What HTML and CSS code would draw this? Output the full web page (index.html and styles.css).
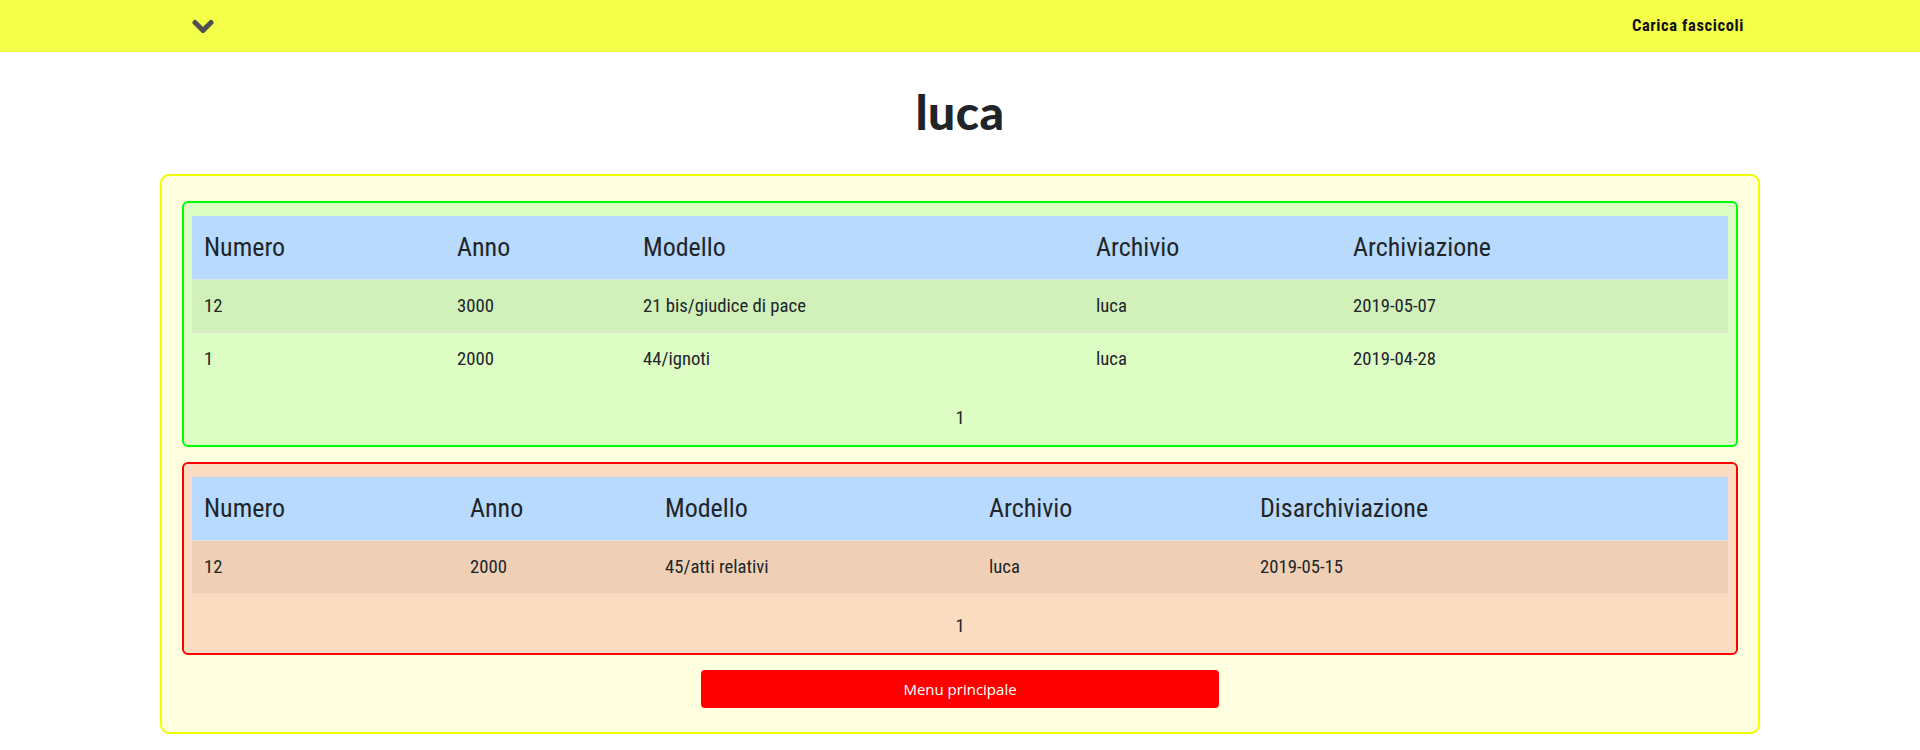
FILE: index.html
```html
<!DOCTYPE html>
<html lang="it">
<head>
<meta charset="utf-8">
<title>luca</title>
<link rel="stylesheet" href="styles.css">
</head>
<body>
<nav class="navbar">
  <span class="toggle">
    <svg width="22" height="15" viewBox="0 0 22 15"><polyline points="3,3.5 11,11.5 19,3.5" fill="none" stroke="#4f4f4f" stroke-width="5" stroke-linecap="round" stroke-linejoin="round"/></svg>
  </span>
  <a class="nav-link">Carica fascicoli</a>
</nav>
<h1 class="title">luca</h1>
<div class="outer">
  <div class="card card-green">
    <table class="tbl">
      <colgroup><col class="g1"><col class="g2"><col class="g3"><col class="g4"><col class="g5"></colgroup>
      <thead><tr><th>Numero</th><th>Anno</th><th>Modello</th><th>Archivio</th><th>Archiviazione</th></tr></thead>
      <tbody>
        <tr class="odd"><td>12</td><td>3000</td><td>21 bis/giudice di pace</td><td>luca</td><td>2019-05-07</td></tr>
        <tr><td>1</td><td>2000</td><td>44/ignoti</td><td>luca</td><td>2019-04-28</td></tr>
      </tbody>
    </table>
    <div class="pager">1</div>
  </div>
  <div class="card card-red">
    <table class="tbl">
      <colgroup><col class="r1"><col class="r2"><col class="r3"><col class="r4"><col class="r5"></colgroup>
      <thead><tr><th>Numero</th><th>Anno</th><th>Modello</th><th>Archivio</th><th>Disarchiviazione</th></tr></thead>
      <tbody>
        <tr class="odd"><td>12</td><td>2000</td><td>45/atti relativi</td><td>luca</td><td>2019-05-15</td></tr>
      </tbody>
    </table>
    <div class="pager">1</div>
  </div>
  <div class="actions">
    <button class="btn-menu">Menu principale</button>
  </div>
</div>
</body>
</html>
```
FILE: styles.css
```css
html, body { margin: 0; padding: 0; background: #fff; color: #212529; }
body { font-family: "Roboto Condensed", "Liberation Sans Narrow", "DejaVu Sans Condensed", Roboto, sans-serif; }

.navbar {
  height: 52px;
  background: #f3ff48;
  display: flex;
  align-items: center;
  justify-content: space-between;
  padding: 0 176px 0 192px;
  box-sizing: border-box;
}
.toggle { display: flex; width: 22px; height: 15px; margin-top: 1px; }
.nav-link {
  font-family: "Roboto Condensed", "DejaVu Sans Condensed", sans-serif;
  font-weight: 700;
  font-size: 16.5px;
  letter-spacing: 0.6px;
  color: #111;
  margin-top: -2px;
}

.title {
  font-family: Lato, "Open Sans", sans-serif;
  font-weight: 900;
  font-size: 48px;
  line-height: 55px;
  letter-spacing: 0.5px;
  text-align: center;
  margin: 32px 0 35px;
  color: #212529;
}

.outer {
  width: 1600px;
  margin: 0 auto;
  box-sizing: border-box;
  border: 2px solid #eeff00;
  border-radius: 9px;
  background: #ffffe0;
  padding: 25px 20px 24px;
}

.card {
  border: 2px solid;
  border-radius: 6px;
  padding: 13px 8px 0;
}
.card-green { border-color: #00ff00; background: #ddfdc4; }
.card-red { border-color: #ff0000; background: #fcdcc0; margin-top: 15px; }

.tbl {
  width: 100%;
  border-collapse: collapse;
  table-layout: fixed;
}
.tbl th {
  background: #b8daff;
  font-weight: 400;
  font-size: 26px;
  line-height: 39px;
  padding: 12px;
  text-align: left;
}
.tbl td {
  font-size: 18.7px;
  line-height: 28px;
  padding: 12px;
  border-top: 1px solid #dee2e6;
  text-align: left;
}
.tbl tr.odd td { background: rgba(0, 0, 0, 0.05); }

.g1 { width: 253px; } .g2 { width: 186px; } .g3 { width: 453px; } .g4 { width: 257px; } .g5 { width: 387px; }
.r1 { width: 266px; } .r2 { width: 195px; } .r3 { width: 324px; } .r4 { width: 271px; } .r5 { width: 480px; }

.pager {
  text-align: center;
  font-size: 18.7px;
  line-height: 27px;
  padding: 20px 0 13px;
}

.actions { display: flex; justify-content: center; margin-top: 15px; }
.btn-menu {
  width: 518px;
  height: 38px;
  background: #ff0000;
  color: #fff;
  border: 0;
  border-radius: 4px;
  font-family: "Open Sans", sans-serif;
  font-size: 15px;
  padding: 0;
}
```
